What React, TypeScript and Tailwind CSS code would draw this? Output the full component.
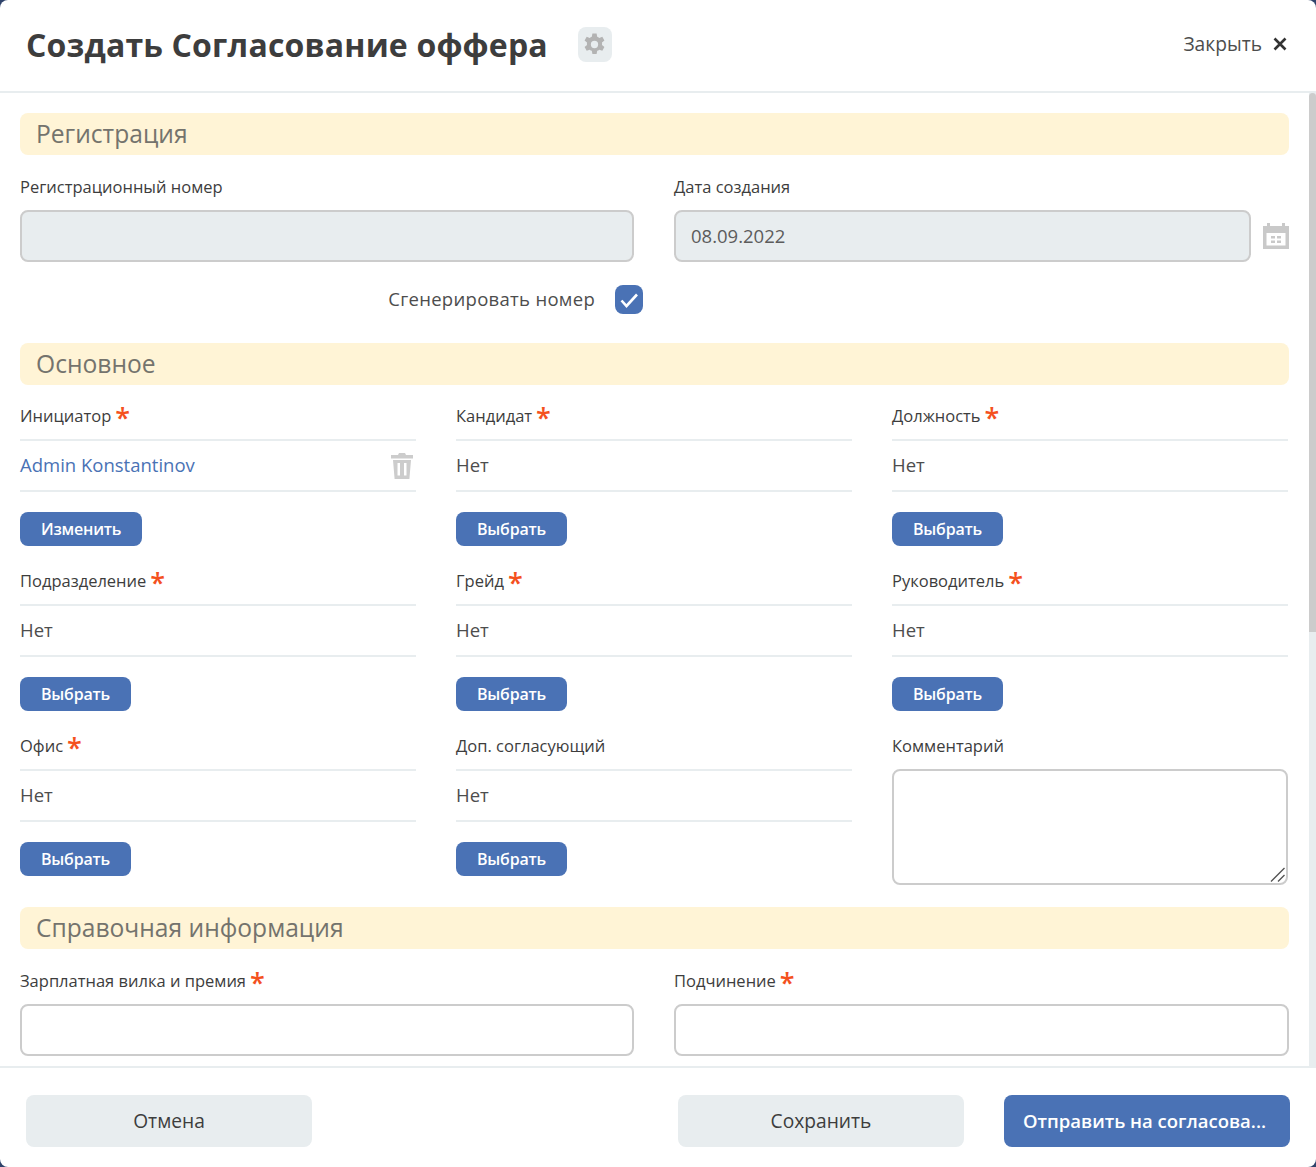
import React from 'react';

function SectionTitle({ title }: { title: string }) {
  return (
    <div className="flex h-[42px] items-center rounded-lg bg-[#fff4d6] pl-4 text-[24.6px] font-medium text-[#74736d]">
      {title}
    </div>
  );
}

function Label({ text, required }: { text: string; required?: boolean }) {
  return (
    <div className="flex h-6 items-center text-[16.5px] font-medium text-[#3d3d3d]">
      {text}
      {required && <span className="ml-1 h-6 text-[27px] leading-[27px] font-semibold text-[#f4511e]">*</span>}
    </div>
  );
}

function TrashIcon() {
  return (
    <svg viewBox="0 0 22 26" className="h-[26px] w-[22px] fill-[#cccccc]">
      <path d="M8 0h6l1 2h7v3.5H0V2h7z" />
      <path fillRule="evenodd" d="M2 7h18l-1.6 19H3.6zM6.5 10v12.5h2.5V10zM13 10v12.5h2.5V10z" />
    </svg>
  );
}

function PickerField({ label, required, value, button, link }: { label: string; required?: boolean; value: string; button: string; link?: boolean }) {
  return (
    <div className="flex h-[165px] flex-col">
      <Label text={label} required={required} />
      <div className="mt-[11px] flex h-[53px] items-center justify-between border-y-2 border-[#e8edef] pr-[3px]">
        <span className={link ? 'mb-0.5 text-[18.5px] text-[#4a72b5]' : 'mb-0.5 text-[18.5px] text-[#4d4d4d]'}>{value}</span>
        {link && <TrashIcon />}
      </div>
      <button className="mt-5 h-[34px] self-start rounded-lg bg-[#4a72b5] px-[21px] text-[16px] font-semibold tracking-[-0.2px] text-white">
        {button}
      </button>
    </div>
  );
}

function CalendarIcon() {
  return (
    <svg viewBox="0 0 26 26" className="h-[26px] w-[26px] shrink-0 fill-[#c9c9c9]">
      <path d="M4 0h3v3h12V0h3v3h4v23H0V3h4z" />
      <rect x="3.5" y="10" width="19" height="12.5" fill="#fff" />
      <rect x="8" y="13" width="4" height="2.5" />
      <rect x="14" y="13" width="4" height="2.5" />
      <rect x="8" y="17.5" width="4" height="2.5" />
      <rect x="14" y="17.5" width="4" height="2.5" />
    </svg>
  );
}

export default function App() {
  return (
    <div className="h-[1167px] w-[1316px] overflow-hidden bg-[#2f436b] font-['Open_Sans','Noto_Sans',sans-serif]">
      <div className="flex h-full flex-col overflow-hidden rounded-lg bg-white">
        <header className="flex h-[93px] shrink-0 items-center justify-between border-b-2 border-[#e8edef] pr-[29px] pb-[3px] pl-[26px]">
          <div className="flex items-center gap-[30px]">
            <h1 className="pt-0.5 text-[32px] font-bold tracking-[0.17px] text-[#3d3d3d]">Создать Согласование оффера</h1>
            <div className="flex h-[35px] w-[34px] items-center justify-center rounded-lg bg-[#e8edef]">
              <svg viewBox="0 0 24 24" className="h-[25px] w-[25px] fill-[#b3b3b3]">
                <path
                  fillRule="evenodd"
                  d="M10 1.5h4l.6 3a8 8 0 0 1 2 1.15l2.9-1 2 3.5-2.3 2a8 8 0 0 1 0 2.3l2.3 2-2 3.5-2.9-1a8 8 0 0 1-2 1.15l-.6 3h-4l-.6-3a8 8 0 0 1-2-1.15l-2.9 1-2-3.5 2.3-2a8 8 0 0 1 0-2.3l-2.3-2 2-3.5 2.9 1a8 8 0 0 1 2-1.15zM12 8.5a3.5 3.5 0 1 0 0 7 3.5 3.5 0 0 0 0-7z"
                />
              </svg>
            </div>
          </div>
          <div className="flex items-center gap-[11px] text-[19.2px] text-[#4d4d4d]">
            Закрыть
            <svg viewBox="0 0 14 14" className="h-[14px] w-[14px] stroke-[#333333] stroke-[2.6]">
              <path d="M1.5 1.5l11 11M12.5 1.5l-11 11" />
            </svg>
          </div>
        </header>

        <div className="flex min-h-0 flex-1">
          <main className="min-w-0 flex-1 overflow-hidden pt-5 pr-5 pl-5">
            <SectionTitle title="Регистрация" />
            <div className="mt-5 grid grid-cols-[614px_615px] gap-x-10">
              <div>
                <Label text="Регистрационный номер" />
                <input disabled className="mt-[11px] block h-[52px] w-full rounded-lg border-2 border-[#cccccc] bg-[#e8edef]" />
              </div>
              <div>
                <Label text="Дата создания" />
                <div className="mt-[11px] flex items-center gap-3">
                  <input
                    disabled
                    value="08.09.2022"
                    className="h-[52px] min-w-0 flex-1 rounded-lg border-2 border-[#cccccc] bg-[#e8edef] px-[15px] pb-0.5 text-[18.5px] text-[#5c5c5c]"
                  />
                  <CalendarIcon />
                </div>
              </div>
            </div>
            <div className="mt-[23px] flex w-[623px] items-center justify-end gap-5">
              <span className="mb-0.5 text-[18.5px] leading-[25px] font-medium tracking-[0.3px] text-[#4d4d4d]">Сгенерировать номер</span>
              <div className="flex h-[29px] w-[28px] items-center justify-center rounded-lg bg-[#4a72b5]">
                <svg viewBox="0 0 20 20" className="h-5 w-5 fill-none stroke-white stroke-[2.6]">
                  <path d="M2.5 10.5l5 5.5L18 4.5" />
                </svg>
              </div>
            </div>

            <div className="mt-[29px]">
              <SectionTitle title="Основное" />
            </div>
            <div className="mt-[19px] grid grid-cols-[396px_396px_396px] gap-x-10">
              <PickerField label="Инициатор" required value="Admin Konstantinov" button="Изменить" link />
              <PickerField label="Кандидат" required value="Нет" button="Выбрать" />
              <PickerField label="Должность" required value="Нет" button="Выбрать" />
              <PickerField label="Подразделение" required value="Нет" button="Выбрать" />
              <PickerField label="Грейд" required value="Нет" button="Выбрать" />
              <PickerField label="Руководитель" required value="Нет" button="Выбрать" />
              <PickerField label="Офис" required value="Нет" button="Выбрать" />
              <PickerField label="Доп. согласующий" value="Нет" button="Выбрать" />
              <div className="flex h-[165px] flex-col">
                <Label text="Комментарий" />
                <div className="relative mt-[11px]">
                  <textarea className="block h-[116px] w-full resize-none rounded-lg border-2 border-[#cccccc] bg-white outline-none" />
                  {/* resize handle */}
                  <svg viewBox="0 0 15 15" className="absolute right-[3px] bottom-[3px] h-[15px] w-[15px] stroke-[#555555] stroke-[1.4]">
                    <path d="M1 14.5L14.5 1M8 14.5L14.5 8" />
                  </svg>
                </div>
              </div>
            </div>

            <div className="mt-2">
              <SectionTitle title="Справочная информация" />
            </div>
            <div className="mt-5 grid grid-cols-[614px_615px] gap-x-10">
              <div>
                <Label text="Зарплатная вилка и премия" required />
                <input className="mt-[11px] block h-[52px] w-full rounded-lg border-2 border-[#cccccc] bg-white" />
              </div>
              <div>
                <Label text="Подчинение" required />
                <input className="mt-[11px] block h-[52px] w-full rounded-lg border-2 border-[#cccccc] bg-white" />
              </div>
            </div>
          </main>
          <div className="w-[7px] shrink-0 bg-[#e8edef]">
            <div className="h-[539px] rounded-t bg-[#cccccc]" />
          </div>
        </div>

        <footer className="flex h-[101px] shrink-0 items-start justify-between border-t-2 border-[#e8edef] pt-[27px] pr-[26px] pl-[26px]">
          <button className="h-[52px] w-[286px] rounded-lg bg-[#e8edef] text-[19.2px] font-medium text-[#3d3d3d]">Отмена</button>
          <div className="flex gap-10">
            <button className="h-[52px] w-[286px] rounded-lg bg-[#e8edef] text-[19.2px] font-medium text-[#3d3d3d]">Сохранить</button>
            <button className="h-[52px] w-[286px] rounded-lg bg-[#4a72b5] pr-[5px] text-[18.5px] font-semibold text-white">Отправить на согласова...</button>
          </div>
        </footer>
      </div>
    </div>
  );
}
